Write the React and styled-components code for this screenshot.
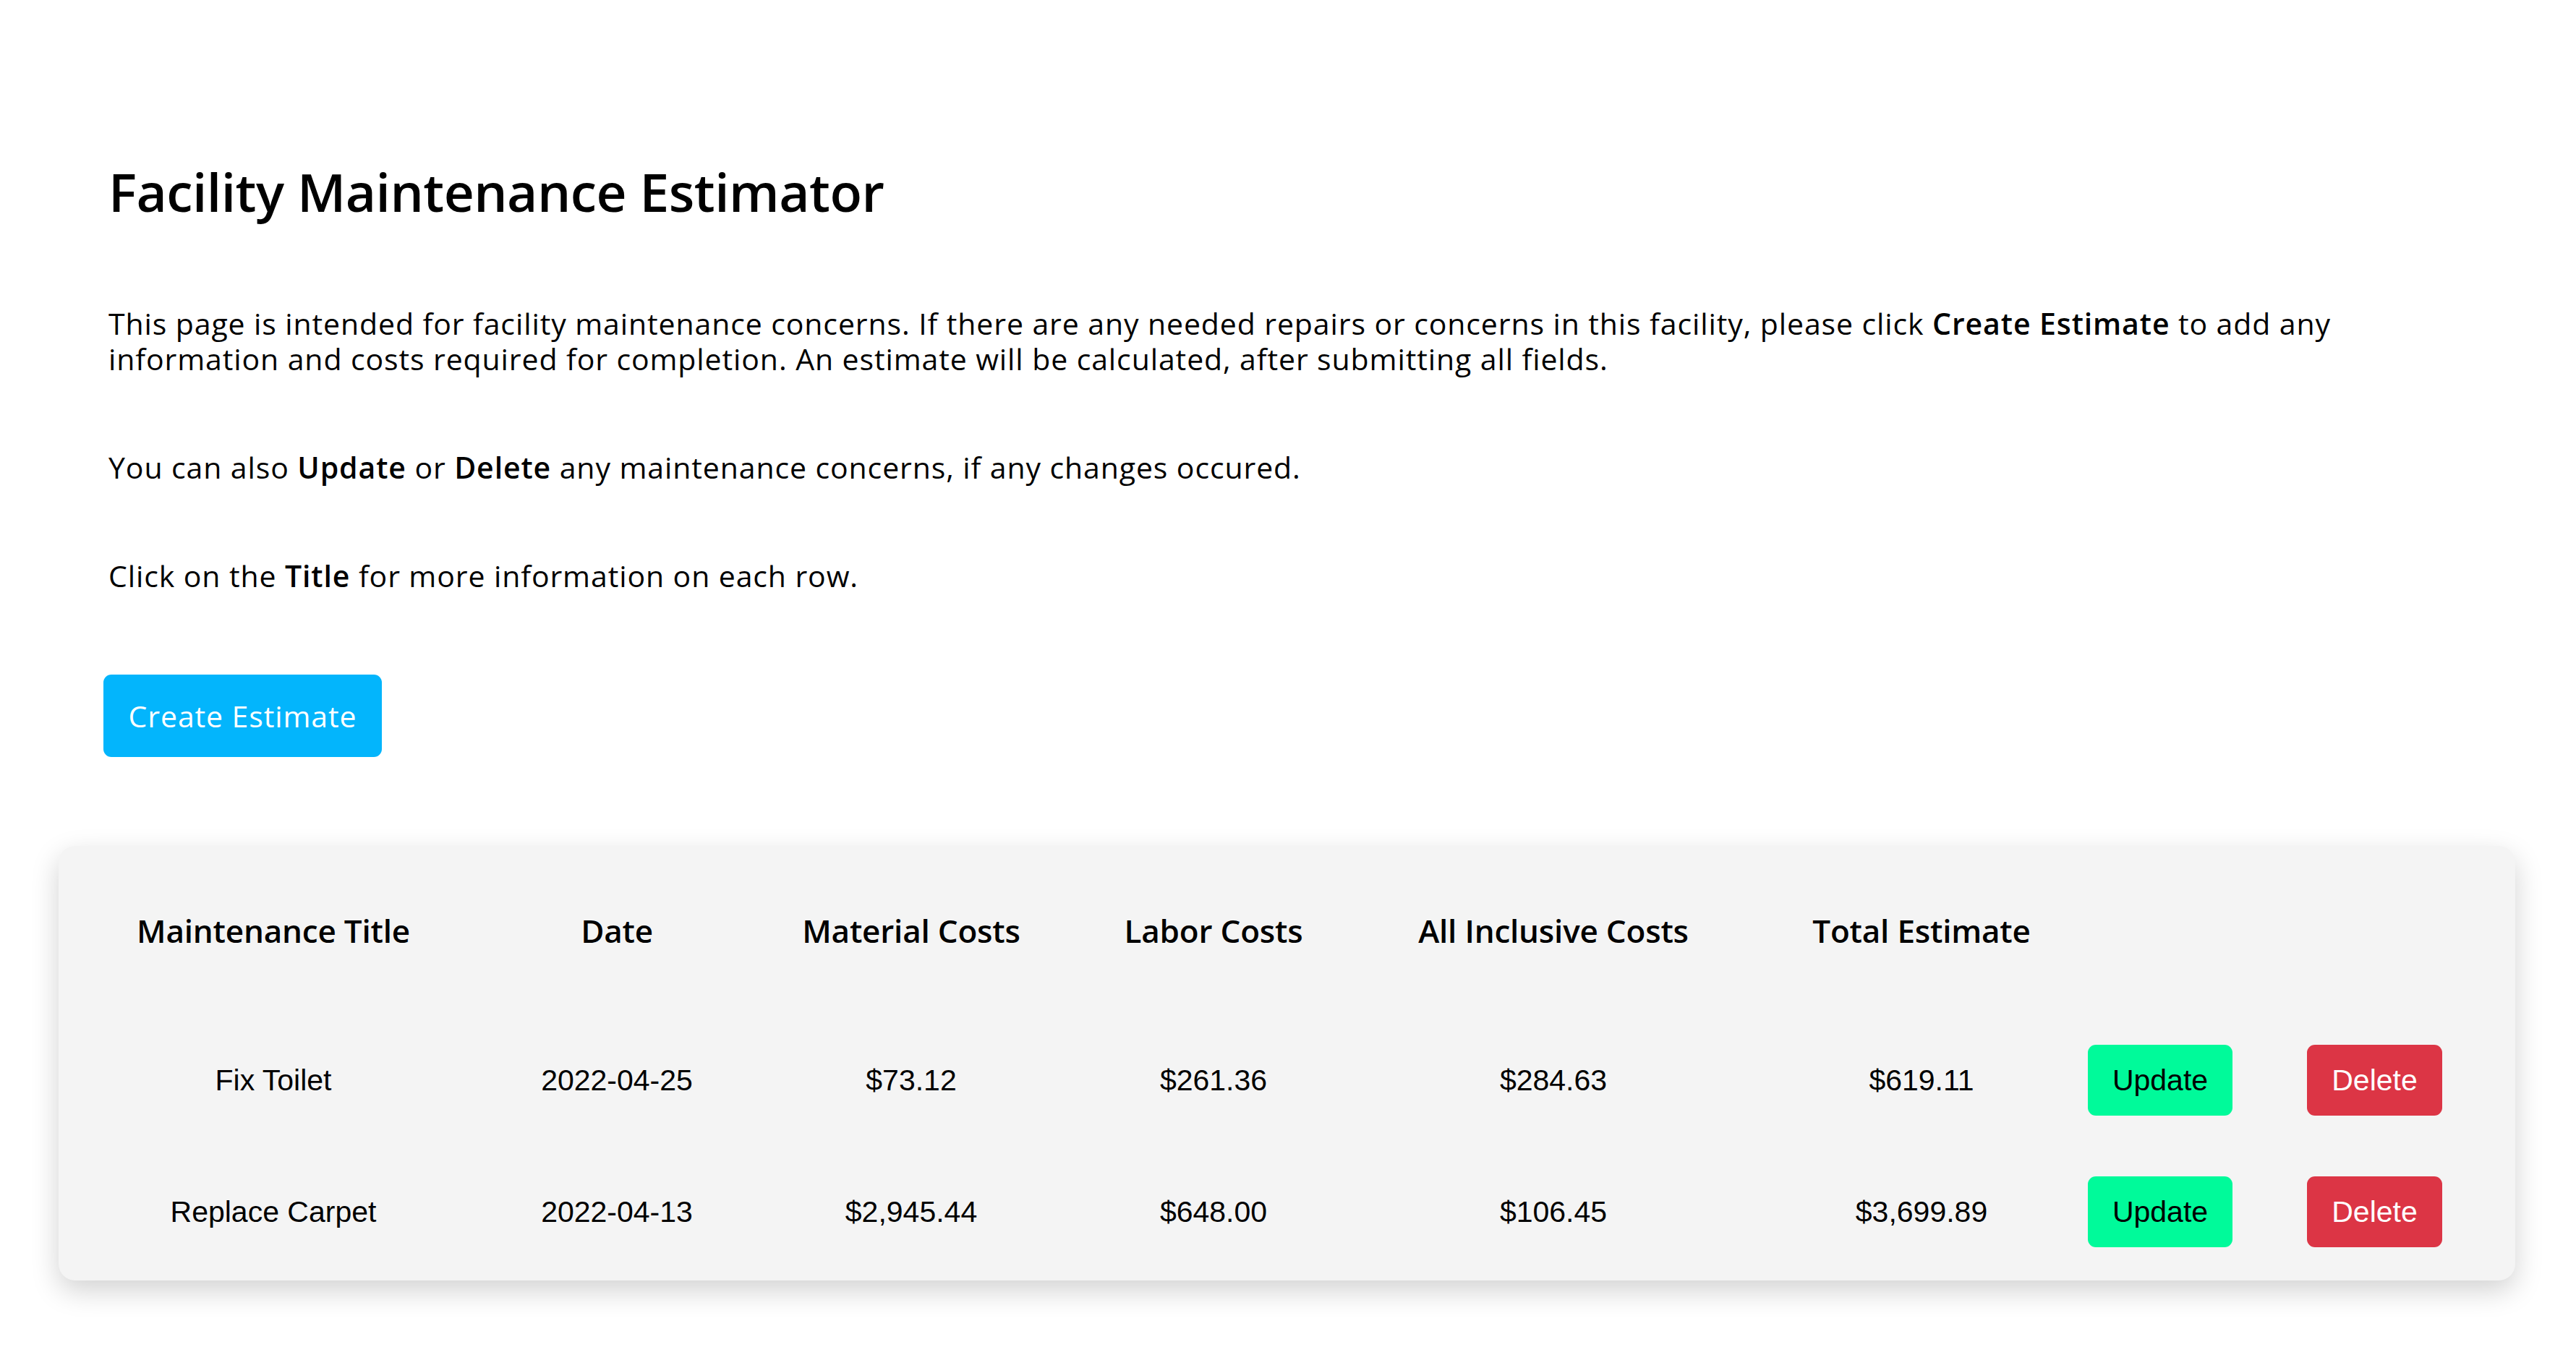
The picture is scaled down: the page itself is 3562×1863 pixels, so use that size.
import React from 'react'
import styled, { createGlobalStyle } from 'styled-components'

const estimates = [
    { title: 'Fix Toilet', date: '2022-04-25', material: '$73.12', labor: '$261.36', inclusive: '$284.63', total: '$619.11' },
    { title: 'Replace Carpet', date: '2022-04-13', material: '$2,945.44', labor: '$648.00', inclusive: '$106.45', total: '$3,699.89' },
]

const headings = ['Maintenance Title', 'Date', 'Material Costs', 'Labor Costs', 'All Inclusive Costs', 'Total Estimate', '', '']

function App() {
    return (
        <>
            <GlobalStyle />
            <Page>
                <Intro>
                    <Title>Facility Maintenance Estimator</Title>
                    <Paragraph>
                        This page is intended for facility maintenance concerns. If there are any needed repairs or concerns in this facility, please click <b>Create Estimate</b> to add any information and costs required for completion. An estimate will be calculated, after submitting all fields.
                    </Paragraph>
                    <Paragraph>
                        You can also <b>Update</b> or <b>Delete</b> any maintenance concerns, if any changes occured.
                    </Paragraph>
                    <Paragraph>
                        Click on the <b>Title</b> for more information on each row.
                    </Paragraph>
                    <CreateButton>Create Estimate</CreateButton>
                </Intro>

                <Card>
                    <HeadRow>
                        {headings.map((h, i) => (
                            <HeadCell key={i}>{h}</HeadCell>
                        ))}
                    </HeadRow>
                    {estimates.map((row, index) => (
                        <Row key={index}>
                            <Cell>{row.title}</Cell>
                            <Cell>{row.date}</Cell>
                            <Cell>{row.material}</Cell>
                            <Cell>{row.labor}</Cell>
                            <Cell>{row.inclusive}</Cell>
                            <Cell>{row.total}</Cell>
                            <Cell><ActionButton variant="update">Update</ActionButton></Cell>
                            <Cell><ActionButton variant="delete">Delete</ActionButton></Cell>
                        </Row>
                    ))}
                </Card>
            </Page>
        </>
    )
}

export default App

const GlobalStyle = createGlobalStyle`
html, body {
    margin: 0;
    padding: 0;
    background: #ffffff;
}
body {
    font-family: 'Open Sans', 'Liberation Sans', sans-serif;
    color: #000;
}
`

const Page = styled.main`
padding: 0 84px 80px 81px;
`

const Intro = styled.section`
display: flex;
flex-direction: column;
align-items: flex-start;
padding: 221px 0 0 69px;
`

const Title = styled.h1`
margin: 0 0 114px 0;
font-size: 73px;
font-weight: 600;
line-height: 88px;
letter-spacing: -0.5px;
`

const Paragraph = styled.p`
margin: 0 0 101px 0;
font-size: 41px;
font-weight: 400;
line-height: 49px;
letter-spacing: 0.9px;
max-width: 3262px;

b {
    font-weight: 600;
}

&:last-of-type {
    margin-bottom: 112px;
}
`

const CreateButton = styled.button`
margin-left: -7px;
width: 385px;
height: 114px;
border: none;
border-radius: 11px;
background: #03b5fc;
color: #fff;
font-family: inherit;
font-size: 41px;
font-weight: 400;
letter-spacing: 0.9px;
cursor: pointer;
`

const Card = styled.section`
margin-top: 123px;
padding: 62px 0 25px 0;
background: #f4f4f4;
border-radius: 23px;
box-shadow: 0 14px 38px rgba(0, 0, 0, 0.18);
`

const columns = '594px 356px 458px 378px 562px 456px 204px 389px'

const HeadRow = styled.div`
display: grid;
grid-template-columns: ${columns};
height: 110px;
margin-bottom: 82px;
align-items: center;
`

const HeadCell = styled.div`
text-align: center;
font-size: 44px;
font-weight: 600;
letter-spacing: -0.2px;
`

const Row = styled.div`
display: grid;
grid-template-columns: ${columns};
height: 140px;
align-items: center;

& + & {
    margin-top: 42px;
}
`

const Cell = styled.div`
display: flex;
justify-content: center;
font-family: 'Liberation Sans', Arial, sans-serif;
font-size: 41px;
color: #000;
`

const ActionButton = styled.button`
height: 98px;
padding: 0 34px;
border: none;
border-radius: 11px;
font-family: 'Liberation Sans', Arial, sans-serif;
font-size: 41px;
background: ${props => props.variant === 'delete' ? '#dc3545' : '#00fa9a'};
color: ${props => props.variant === 'delete' ? '#ffffff' : '#000000'};
cursor: pointer;
`
